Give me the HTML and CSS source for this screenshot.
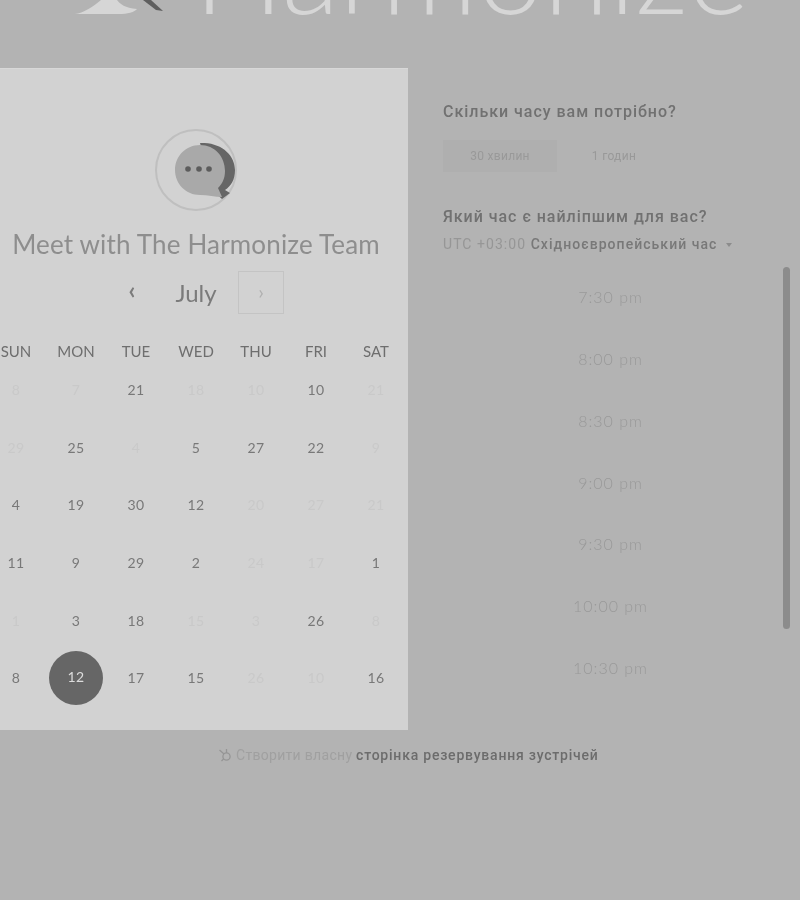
FILE: index.html
```html
<!DOCTYPE html>
<html lang="uk">
<head>
<meta charset="utf-8">
<title>Harmonize</title>
<link rel="stylesheet" href="styles.css">
</head>
<body>
<div class="page">
  <header class="brand">
    <svg class="brand-mark" width="90" height="16" viewBox="0 0 90 16">
      <path class="mark-light" d="M0 14 C8 13 18 7 26 0 L42 0 C45 4 50 8 62 9 C60 12 52 14 44 14 Z"/>
      <path class="mark-dark" d="M68 0 L76 0 L88 11 L81 10 Z"/>
    </svg>
    <span class="brand-name">Harmonize</span>
  </header>
  <main class="main">
    <section class="card">
      <div class="avatar">
        <svg width="62" height="56" viewBox="0 0 62 56">
          <path class="bubble-dark" d="M25 0 C46 -1 60 12 60 27 C60 37 56 43 50 47 L55 50 L47 56 L38 48 Z"/>
          <path class="bubble-light" d="M25 2 C40 2 50 14 50 28 C50 36 47 41 43 45 L47 54 C40 54 33 52 25 52 C11 52 0 41 0 27 C0 13 11 2 25 2 Z"/>
          <circle class="dot" cx="13" cy="26" r="2.8"/>
          <circle class="dot" cx="24" cy="26" r="2.8"/>
          <circle class="dot" cx="34" cy="26" r="2.8"/>
        </svg>
      </div>
      <h1 class="title">Meet with The Harmonize Team</h1>
      <div class="month">
        <span class="prev">‹</span>
        <span class="month-name">July</span>
        <span class="next">›</span>
      </div>
      <div class="grid weekdays">
        <span>SUN</span><span>MON</span><span>TUE</span><span>WED</span><span>THU</span><span>FRI</span><span>SAT</span>
      </div>
      <div class="grid days">
        <span class="off">8</span><span class="off">7</span><span>21</span><span class="off">18</span><span class="off">10</span><span>10</span><span class="off">21</span>
        <span class="off">29</span><span>25</span><span class="off">4</span><span>5</span><span>27</span><span>22</span><span class="off">9</span>
        <span>4</span><span>19</span><span>30</span><span>12</span><span class="off">20</span><span class="off">27</span><span class="off">21</span>
        <span>11</span><span>9</span><span>29</span><span>2</span><span class="off">24</span><span class="off">17</span><span>1</span>
        <span class="off">1</span><span>3</span><span>18</span><span class="off">15</span><span class="off">3</span><span>26</span><span class="off">8</span>
        <span>8</span><span class="selected"><b>12</b></span><span>17</span><span>15</span><span class="off">26</span><span class="off">10</span><span>16</span>
      </div>
    </section>
    <section class="side">
      <h2 class="question">Скільки часу вам потрібно?</h2>
      <div class="durations">
        <span class="duration active">30 хвилин</span>
        <span class="duration">1 годин</span>
      </div>
      <h2 class="question second">Який час є найліпшим для вас?</h2>
      <div class="zone">UTC +03:00 <strong>Східноєвропейський час</strong><i class="caret"></i></div>
      <div class="slots-wrap">
        <ul class="slots">
          <li>7:30 pm</li>
          <li>8:00 pm</li>
          <li>8:30 pm</li>
          <li>9:00 pm</li>
          <li>9:30 pm</li>
          <li>10:00 pm</li>
          <li>10:30 pm</li>
        </ul>
        <div class="scrollbar"></div>
      </div>
    </section>
  </main>
  <footer class="foot">
    <svg class="sprocket" width="14" height="14" viewBox="0 0 14 14">
      <circle cx="8.5" cy="8.5" r="3.6"/>
      <path d="M6 6 L1.5 2 M8.5 5 L8.5 1 M5.6 11 L3.5 13"/>
    </svg>
    <span>Створити власну <strong>сторінка резервування зустрічей</strong></span>
  </footer>
</div>
</body>
</html>
```

FILE: styles.css
```css
* { box-sizing: border-box; }
html, body { margin: 0; padding: 0; }
body { background: #b3b3b3; font-family: "Roboto", "Liberation Sans", sans-serif; }

.page { width: 800px; height: 900px; overflow: hidden; background: #b3b3b3; filter: grayscale(1) blur(.5px); }

.brand { height: 68px; padding-left: 75px; overflow: hidden; display: flex; align-items: flex-start; }
.brand-mark { flex: none; }
.mark-light { fill: #d6d6d6; }
.mark-dark { fill: #5f5f5f; }
.brand-name {
  flex: none;
  margin: -82px 0 0 29px;
  font: 300 119px/100px "Lato", sans-serif;
  color: #d6d6d6;
}

.main { display: flex; height: 662px; }

.card {
  flex: none;
  width: 422px;
  margin-left: -14px;
  padding: 60px 2px 0 0;
  background: #d2d2d2;
  border-top: 1px solid #d8d8d8;
  font-family: "Lato", sans-serif;
}
.avatar {
  width: 82px; height: 82px;
  margin: 0 auto;
  border: 2px solid #bfbfbf;
  border-radius: 50%;
  display: flex; align-items: center; justify-content: center;
  padding: 2px 0 0 20px;
}
.avatar svg { flex: none; }
.bubble-dark { fill: #666; }
.bubble-light { fill: #a9a9a9; }
.dot { fill: #5c5c5c; }

.title {
  margin: 17px 0 0;
  text-align: center;
  font-size: 26px; line-height: 32px; font-weight: 400;
  letter-spacing: .17px;
  color: #8e8e8e;
}
.month {
  margin-top: 11px;
  height: 43px;
  padding-left: 126px;
  display: flex;
  align-items: center;
  text-align: center;
}
.prev { width: 40px; margin-bottom: 6px; font-size: 24px; font-weight: 700; line-height: 34px; color: #7c7c7c; }
.month-name { width: 80px; margin: 0 2px 0 4px; font-size: 24px; line-height: 40px; color: #7b7b7b; }
.next {
  width: 46px; height: 43px; line-height: 38px;
  border: 1px solid #c4c4c4;
  font-size: 20px; color: #b0b0b0;
}

.grid { display: grid; grid-template-columns: repeat(7, 60px); text-align: center; }
.weekdays { margin-top: 26px; height: 22px; line-height: 22px; font-size: 15px; color: #6e6e6e; }
.days { margin-top: -1px; grid-auto-rows: 57.6px; font-size: 14px; letter-spacing: .5px; color: #787878; align-items: center; }
.off { color: #c9c9c9; }
.selected { display: flex; justify-content: center; }
.selected b {
  width: 54px; height: 54px; line-height: 52px;
  border-radius: 50%;
  background: #666;
  color: #dcdcdc;
  font-weight: 400;
}

.side { flex: 1; padding: 32px 0 0 35px; min-width: 0; }
.question {
  margin: 0;
  font-size: 16px; line-height: 24px; font-weight: 500;
  letter-spacing: .97px;
  color: #717171;
}
.second { margin-top: 33px; }
.durations { display: flex; margin-top: 16px; }
.duration {
  width: 114px; height: 32px; line-height: 32px;
  text-align: center;
  font-size: 12px; letter-spacing: .3px;
  color: #999;
}
.active { background: #afafaf; }
.zone { margin-top: 4px; height: 22px; line-height: 22px; font-size: 14px; letter-spacing: 1.05px; color: #969696; white-space: nowrap; }
.zone strong { font-weight: 500; color: #787878; }
.caret {
  display: inline-block; margin-left: 9px; vertical-align: 2px;
  border: 3px solid transparent; border-top: 4px solid #8c8c8c; border-bottom: 0;
}

.slots-wrap { display: flex; margin-top: 11px; }
.slots { list-style: none; margin: 0; padding: 0; width: 335px; }
.slots li {
  height: 61.85px; line-height: 61.85px;
  text-align: center;
  font-family: "Lato", sans-serif;
  font-size: 16px; font-weight: 300; letter-spacing: 1px;
  color: #999;
}
.scrollbar { width: 7px; height: 362px; margin: 1px 0 0 5px; border-radius: 4px; background: #8c8c8c; }

.foot {
  display: flex; align-items: center;
  height: 50px;
  padding-left: 218px;
  font-size: 14px; letter-spacing: .3px;
  color: #a0a0a0;
}
.foot strong { font-weight: 500; letter-spacing: .78px; color: #6c6c6c; }
.sprocket { margin-right: 4px; fill: none; stroke: #959595; stroke-width: 1.3; }
```
